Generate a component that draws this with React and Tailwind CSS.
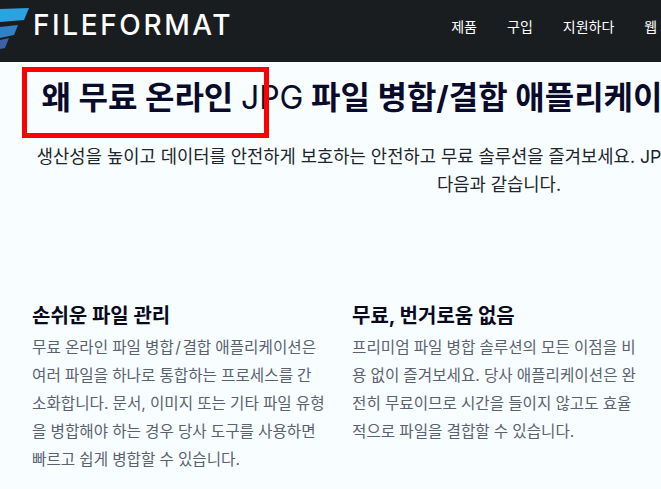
export default function App() {
  return (
    <div className="relative w-[661px] h-[489px] overflow-hidden bg-[#f8fdff] font-['Inter','Noto_Sans_CJK_KR',sans-serif]">
      <div className="w-[998px]">
        <header className="h-[62px] bg-[#1a1d20] flex items-center pb-[12px]">
          <svg width="30" height="44" viewBox="0 0 30 44" className="shrink-0 self-start mt-[7px]">
            <path d="M0 2 L29 1 L24 13 L0 15 Z" fill="#29a3e2" />
            <path d="M0 20 L18 18 L14 28 L0 31 Z" fill="#2f80c7" />
            <path d="M0 33 L9 31 L5 41 L0 42 Z" fill="#3f5fa8" />
          </svg>
          <span className="ml-[3px] text-[28px] leading-none font-medium text-white tracking-[2.6px] font-['Inter',sans-serif]">FILEFORMAT</span>
          <nav className="ml-[218px] mt-[2px] flex items-center gap-[30px] text-[14px] text-white font-['Noto_Sans_CJK_KR',sans-serif]">
            <span>제품</span>
            <span>구입</span>
            <span>지원하다</span>
            <span>웹 사이트</span>
          </nav>
        </header>
        <main className="text-center">
          <h1 className="mt-[15px] pl-[4px] text-[32px] leading-[42px] font-bold text-[#0a0a2a] whitespace-nowrap">왜 무료 온라인 <span className="font-normal">JPG</span> 파일 병합/결합 애플리케이션을 선택해야 하나요?</h1>
          <p className="mt-[24px] text-[17.7px] leading-[28px] text-[#20242c] font-normal">
            <span className="block whitespace-nowrap">생산성을 높이고 데이터를 안전하게 보호하는 안전하고 무료 솔루션을 즐겨보세요. JPG 파일 병합/결합 애플리케이션의 이점은</span>
            <span className="block">다음과 같습니다.</span>
          </p>
        </main>
        <section className="mt-[104px] pl-[32px] grid grid-cols-[293px_293px] gap-x-[27px] text-left">
          <div>
            <h3 className="text-[20px] leading-[26px] font-bold text-[#0a0a1e]">손쉬운 파일 관리</h3>
            <p className="mt-[5px] text-[15.65px] leading-[28px] [word-spacing:-0.3px] text-[#5a6270]">무료 온라인 파일 병합<span className="px-[1.5px]">/</span>결합 애플리케이션은 여러 파일을 하나로 통합하는 프로세스를 간소화합니다. 문서, 이미지 또는 기타 파일 유형을 병합해야 하는 경우 당사 도구를 사용하면 빠르고 쉽게 병합할 수 있습니다.</p>
          </div>
          <div>
            <h3 className="text-[20px] leading-[26px] font-bold text-[#0a0a1e]">무료, 번거로움 없음</h3>
            <p className="mt-[5px] text-[15.65px] leading-[28px] [word-spacing:-0.3px] text-[#5a6270]">프리미엄 파일 병합 솔루션의 모든 이점을 비용 없이 즐겨보세요. 당사 애플리케이션은 완전히 무료이므로 시간을 들이지 않고도 효율적으로 파일을 결합할 수 있습니다.</p>
          </div>
        </section>
      </div>
      <div className="absolute left-[22px] top-[67px] w-[247px] h-[71px] border-[5px] border-[#ff0000]" />
    </div>
  );
}
